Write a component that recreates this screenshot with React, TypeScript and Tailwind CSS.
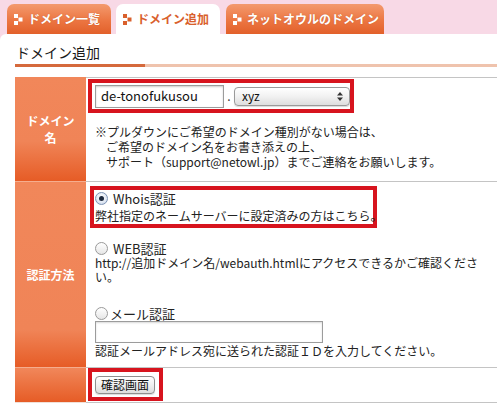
import React from "react";

const Icon = ({ color }: { color: string }) => (
  <svg width="9" height="11" viewBox="0 0 9 11" className="shrink-0">
    <rect x="0" y="0" width="4" height="4" fill={color} />
    <rect x="4.5" y="3.5" width="4" height="4" fill={color} />
    <rect x="0" y="7" width="4" height="4" fill={color} />
  </svg>
);

const Radio = ({ checked }: { checked?: boolean }) => (
  <span
    className={
      "inline-flex items-center justify-center w-[13px] h-[13px] rounded-full border shrink-0 " +
      (checked
        ? "border-[#7d93b5] bg-[radial-gradient(circle_at_50%_40%,#ffffff_0%,#dfe7f3_60%,#b9c8de_100%)]"
        : "border-[#9a9a9a] bg-[linear-gradient(to_bottom,#ffffff,#e6e6e6)]")
    }
  >
    {checked && <span className="w-[5px] h-[5px] rounded-full bg-[#1d2a3f]" />}
  </span>
);

export default function App() {
  return (
    <div className="w-[497px] h-[411px] overflow-hidden bg-[#f8d9e6] font-['Noto_Sans_CJK_JP','Noto_Sans',sans-serif] text-[#222]">
      {/* tabs */}
      <div className="h-[34px] flex items-end">
        <div className="ml-[7px] w-[104px] h-[30px] rounded-t-[7px] bg-[linear-gradient(to_bottom,#f39a6e,#ec7642_55%,#e2602a)] flex items-center pl-[7px] gap-[5px] text-white text-[12px] font-bold leading-none [text-shadow:0_0_1px_rgba(150,60,20,0.5)]">
          <Icon color="#ffffff" />
          <span>ドメイン一覧</span>
        </div>
        <div className="ml-[5px] w-[104px] h-[30px] rounded-t-[7px] bg-white flex items-center pl-[7px] gap-[5px] text-[#d9602c] text-[12px] font-bold leading-none">
          <Icon color="#d9602c" />
          <span>ドメイン追加</span>
        </div>
        <div className="ml-[6px] w-[158px] h-[30px] rounded-t-[7px] bg-[linear-gradient(to_bottom,#f39a6e,#ec7642_55%,#e2602a)] flex items-center pl-[7px] gap-[5px] text-white text-[12px] font-bold leading-none [text-shadow:0_0_1px_rgba(150,60,20,0.5)]">
          <Icon color="#ffffff" />
          <span>ネットオウルのドメイン</span>
        </div>
      </div>

      {/* panel */}
      <div className="bg-white rounded-tl-[6px] h-[377px] pl-[15px]">
        <div className="pt-[8px] pl-[1px] h-[28px] text-[14px] leading-[20px] text-[#1a1a1a]">ドメイン追加</div>
        <div className="mt-[2px] flex h-[3px]">
          <div className="w-[130px] bg-[#d5693c]" />
          <div className="flex-1 bg-[#efc3ad]" />
        </div>

        {/* table */}
        <div className="mt-[10px] grid grid-cols-[71px_1fr] text-[12px]">
          {/* row 1 */}
          <div className="h-[105px] border-b border-[#f5ad8e] bg-[linear-gradient(to_bottom,#f1875a_0%,#f08457_62%,#e65c26_100%)] flex items-center justify-center text-center text-white font-bold leading-[17px]">
            ドメイン
            <br />
            名
          </div>
          <div className="h-[105px] border-t border-b border-[#c4c4c4] pt-[1px]">
            <div className="ml-[2px] w-[266px] h-[34px] border-[4px] border-[#d7141e] flex items-center pl-[3px]">
              <div className="w-[129px] h-[23px] border border-[#9c9c9c] shadow-[inset_0_1px_2px_rgba(0,0,0,0.2)] bg-white flex items-center pl-[5px] text-[13px] text-[#111]">
                de-tonofukusou
              </div>
              <span className="w-[10px] text-center text-[12px] text-[#333]">.</span>
              <div className="w-[116px] h-[19px] rounded-[4px] border border-[#9a9a9a] bg-[linear-gradient(to_bottom,#ffffff,#f1f1f1_50%,#dedede)] shadow-[0_1px_1px_rgba(0,0,0,0.15)] flex items-center justify-between pl-[7px] pr-[6px] text-[12px] leading-none text-[#111]">
                <span>xyz</span>
                <svg width="6" height="9" viewBox="0 0 6 9">
                  <path d="M3 0 L6 3.5 L0 3.5 Z" fill="#333" />
                  <path d="M3 9 L6 5.5 L0 5.5 Z" fill="#333" />
                </svg>
              </div>
            </div>
            <div className="mt-[11px] pl-[9px] leading-[15px] text-[#222] whitespace-nowrap">
              <div>※プルダウンにご希望のドメイン種別がない場合は、</div>
              <div className="pl-[11px]">ご希望のドメイン名をお書き添えの上、</div>
              <div className="pl-[11px]">サポート（support@netowl.jp）までご連絡をお願いします。</div>
            </div>
          </div>

          {/* row 2 */}
          <div className="h-[186px] border-b border-[#f5ad8e] bg-[linear-gradient(to_bottom,#f1875a_0%,#f08457_80%,#e65c26_100%)] flex items-center justify-center text-white font-bold leading-[17px]">
            認証方法
          </div>
          <div className="h-[186px] border-b border-[#c4c4c4] pt-[4px]">
            <div className="ml-[4px] w-[287px] h-[42px] border-[4px] border-[#d7141e] pl-[1px] whitespace-nowrap">
              <div className="h-[17px] flex items-center gap-[5px] text-[13px]">
                <Radio checked />
                <span>Whois認証</span>
              </div>
              <div className="h-[17px] leading-[17px]">弊社指定のネームサーバーに設定済みの方はこちら。</div>
            </div>
            <div className="pl-[9px] mt-[13px] whitespace-nowrap">
              <div className="h-[15px] flex items-center gap-[5px] text-[13px]">
                <Radio />
                <span>WEB認証</span>
              </div>
              <div className="leading-[14px]">
                http://追加ドメイン名/webauth.htmlにアクセスできるかご確認くださ
                <br />
                い。
              </div>
              <div className="mt-[22px] h-[15px] flex items-center gap-[2px] text-[13px]">
                <Radio />
                <span>メール認証</span>
              </div>
              <div className="w-[228px] h-[22px] border border-[#9c9c9c] shadow-[inset_0_1px_2px_rgba(0,0,0,0.15)] bg-white" />
              <div className="mt-[1px] leading-[14px]">認証メールアドレス宛に送られた認証ＩＤを入力してください。</div>
            </div>
          </div>

          {/* row 3 */}
          <div className="h-[35px] border-b border-[#f0e0d8] bg-[linear-gradient(to_bottom,#f1875a,#e65c26)]" />
          <div className="h-[35px] border-b border-[#c4c4c4]">
            <div className="ml-[2px] w-[75px] h-[33px] border-[4px] border-[#d7141e] flex items-center pl-[3px]">
              <div className="w-[60px] h-[18px] rounded-[4px] border border-[#8f8f8f] bg-[linear-gradient(to_bottom,#ffffff,#f0f0f0_50%,#dcdcdc)] shadow-[0_1px_1px_rgba(0,0,0,0.15)] flex items-center justify-center text-[12px] leading-none text-[#111]">
                確認画面
              </div>
            </div>
          </div>
        </div>
      </div>
    </div>
  );
}
